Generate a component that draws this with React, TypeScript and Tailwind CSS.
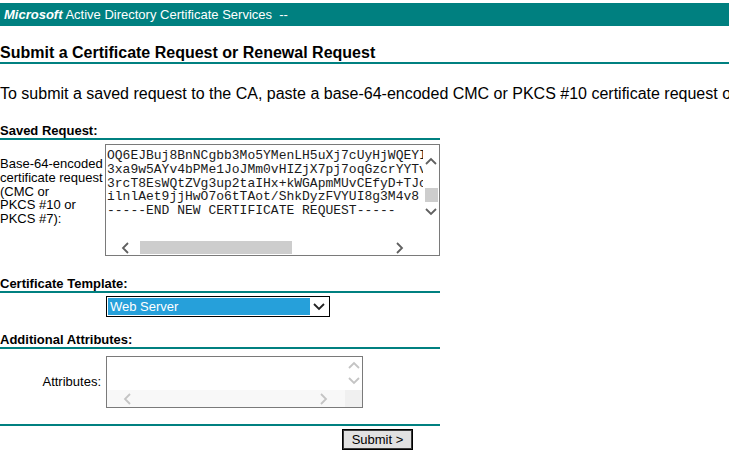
import type { FC } from "react";

const TEAL = "border-[#008080]";

const Chevron: FC<{ dir: "up" | "down" | "left" | "right"; color?: string }> = ({
  dir,
  color = "#606060",
}) => {
  const pts = {
    up: "1,7 6,2 11,7",
    down: "1,2 6,7 11,2",
    left: "7,1 2,6 7,11",
    right: "2,1 7,6 2,11",
  }[dir];
  const size = dir === "up" || dir === "down" ? { w: 12, h: 9 } : { w: 9, h: 12 };
  return (
    <svg
      width={size.w}
      height={size.h}
      viewBox={`0 0 ${size.w} ${size.h}`}
      className="block shrink-0"
    >
      <polyline points={pts} fill="none" stroke={color} strokeWidth="1.8" />
    </svg>
  );
};

const SectionHeading: FC<{ title: string; className?: string }> = ({ title, className }) => (
  <div
    className={`border-b-2 ${TEAL} text-[13px] font-bold leading-[15px] ${className ?? ""}`}
  >
    {title}
  </div>
);

const requestLines = [
  "OQ6EJBuj8BnNCgbb3Mo5YMenLH5uXj7cUyHjWQEYIa9Kd",
  "3xa9w5AYv4bPMe1JoJMm0vHIZjX7pj7oqGzcrYYTvQ2pL",
  "3rcT8EsWQtZVg3up2taIHx+kWGApmMUvCEfyD+TJcW0sb",
  "ilnlAet9jjHwO7o6tTAot/ShkDyzFVYUI8g3M4v8 ",
  "-----END NEW CERTIFICATE REQUEST-----",
];

const SavedRequestBox: FC = () => (
  <div className="ml-[2px] flex h-[112px] w-[335px] flex-col border border-[#7a7a7a] bg-white">
    <div className="flex min-h-0 flex-1">
      <div className="min-w-0 flex-1 overflow-hidden whitespace-nowrap pl-[1px] pt-[4px] font-['Liberation_Mono','Courier_New',monospace] text-[13px] leading-[13.75px] text-[#1a1a1a]">
        {requestLines.map((line) => (
          <div key={line}>{line}</div>
        ))}
      </div>
      <div className="flex w-[16px] flex-col items-center pt-[12px]">
        <Chevron dir="up" />
        <div className="mt-[22px] h-[14px] w-[13px] bg-[#cdcdcd]" />
        <div className="mt-[5px]">
          <Chevron dir="down" />
        </div>
      </div>
    </div>
    <div className="flex h-[15px] items-center">
      <div className="ml-[15px]">
        <Chevron dir="left" />
      </div>
      <div className="ml-[10px] h-[13px] w-[152px] bg-[#cdcdcd]" />
      <div className="ml-[103px]">
        <Chevron dir="right" />
      </div>
    </div>
  </div>
);

const AttributesBox: FC = () => (
  <div className="ml-[2px] flex h-[52px] w-[257px] flex-col border border-[#7a7a7a] bg-white">
    <div className="flex min-h-0 flex-1">
      <div className="flex-1" />
      <div className="flex w-[17px] flex-col items-center gap-[6px] pt-[4px]">
        <Chevron dir="up" color="#c4c4c4" />
        <Chevron dir="down" color="#c4c4c4" />
      </div>
    </div>
    <div className="flex h-[17px] bg-[#f8f8f8]">
      <div className="flex flex-1 items-center">
        <div className="ml-[16px]">
          <Chevron dir="left" color="#c4c4c4" />
        </div>
        <div className="ml-auto mr-[17px]">
          <Chevron dir="right" color="#c4c4c4" />
        </div>
      </div>
      <div className="w-[17px] bg-[#f0f0f0]" />
    </div>
  </div>
);

export default function App() {
  return (
    <div className="h-[466px] w-[729px] overflow-hidden bg-white font-['Liberation_Sans',Arial,sans-serif] text-black">
      <div className="mt-[3px] flex h-[23px] items-center bg-[#008080] pl-[4px] text-[13px] text-white">
        <span className="font-bold italic">Microsoft</span>
        <span className="whitespace-pre"> Active Directory Certificate Services  --</span>
      </div>

      <h1 className={`mt-[18px] border-b-2 ${TEAL} text-[16px] font-bold leading-[18px]`}>
        Submit a Certificate Request or Renewal Request
      </h1>

      <p className="mt-[21px] whitespace-nowrap text-[16px] leading-[18px]">
        To submit a saved request to the CA, paste a base-64-encoded CMC or PKCS #10 certificate
        request or PKCS #7 renewal request generated by an external source (such as a Web server)
        in the Saved Request box.
      </p>

      <div className="w-[440px]">
        <SectionHeading title="Saved Request:" className="mt-[20px]" />
        <div className="mt-[4px] flex">
          <div className="w-[104px] pt-[13px] text-[13px] leading-[13.75px]">
            Base-64-encoded certificate request
            <br />
            (CMC or
            <br />
            PKCS #10 or
            <br />
            PKCS #7):
          </div>
          <SavedRequestBox />
        </div>

        <SectionHeading title="Certificate Template:" className="mt-[20px]" />
        <div className="mt-[3px] flex">
          <div className="w-[104px]" />
          <div className="ml-[2px] flex h-[21px] w-[224px] border border-black bg-white p-[1px]">
            <div className="flex flex-1 items-center bg-[#26a0da] pl-[2px] text-[13px] text-white">
              Web Server
            </div>
            <div className="flex w-[18px] items-center justify-center">
              <Chevron dir="down" color="#222" />
            </div>
          </div>
        </div>

        <SectionHeading title="Additional Attributes:" className="mt-[15px]" />
        <div className="mt-[7px] flex items-center">
          <div className="w-[104px] pr-[3px] text-right text-[13px]">Attributes:</div>
          <AttributesBox />
        </div>

        <div className={`mt-[16px] border-b-2 ${TEAL}`} />
        <button
          type="button"
          className="ml-[342px] mt-[3px] h-[21px] w-[71px] border border-black bg-[#e1e1e1] text-[13px] leading-[17px] shadow-[inset_0_0_0_1px_#3a3a3a]"
        >
          Submit &gt;
        </button>
      </div>
    </div>
  );
}
